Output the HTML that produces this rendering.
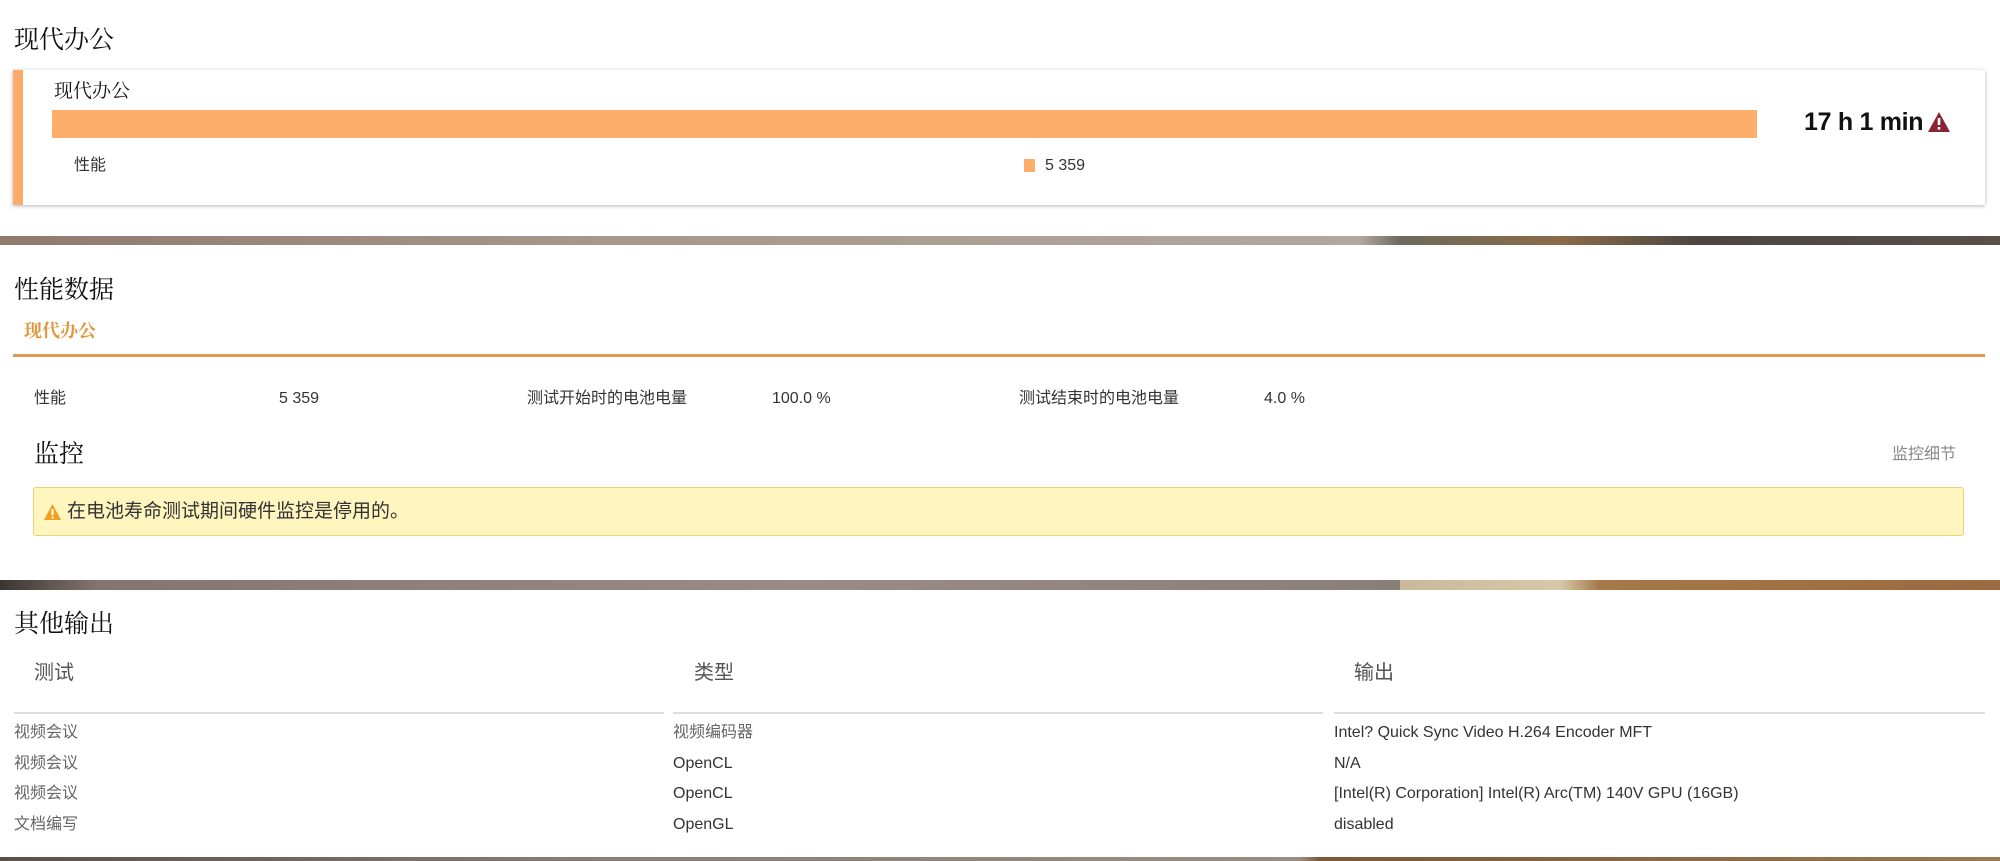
<!DOCTYPE html>
<html><head><meta charset="utf-8"><style>
*{margin:0;padding:0;box-sizing:border-box}
body{width:2000px;height:861px;background:#fff;position:relative;overflow:hidden;font-family:"Liberation Sans","Noto Sans CJK SC",sans-serif;color:#222}
.a{position:absolute;white-space:nowrap;line-height:1}
.h{font-size:25px;color:#111;font-family:"Noto Serif CJK SC","Noto Sans CJK SC",serif}
.s{font-size:16px;color:#333}
.g{font-size:16px;color:#666}
.band{position:absolute;left:0;width:2000px}
</style></head><body>
<div class="a h" style="left:14px;top:26px">现代办公</div>
<div style="position:absolute;left:13px;top:70px;width:1972px;height:135px;background:#fff;box-shadow:0 1px 4px rgba(0,0,0,.3);border-left:10px solid #fdab6a"></div>
<div class="a" style="left:54px;top:80px;font-size:19px;color:#111;font-family:'Noto Serif CJK SC',serif">现代办公</div>
<div style="position:absolute;left:52px;top:110px;width:1705px;height:28px;background:#fdae6b"></div>
<div class="a" style="left:1804px;top:110px;font-size:25px;font-weight:bold;color:#111;font-family:'Liberation Sans',sans-serif;letter-spacing:-0.3px">17 h 1 min</div>
<svg style="position:absolute;left:1927px;top:111px" width="24" height="22" viewBox="0 0 24 22"><path d="M12 1 L23 21 L1 21 Z" fill="#8b2332"/><rect x="10.7" y="7" width="2.6" height="7" fill="#fff"/><rect x="10.7" y="16" width="2.6" height="2.6" fill="#fff"/></svg>
<div class="a s" style="left:74px;top:158px">性能</div>
<div style="position:absolute;left:1024px;top:159px;width:11px;height:13px;background:#fdae6b"></div>
<div class="a s" style="left:1045px;top:158px">5 359</div>
<div class="band" style="top:236px;height:9px;background:linear-gradient(90deg,#8f7a6c,#a8978a 30%,#b3a79c 68%,#6e6a5c 70%,#8b6b48 78%,#4c4540 85%,#5a5048 100%)"></div>
<div class="a h" style="left:14px;top:276px">性能数据</div>
<div class="a" style="left:24px;top:321px;font-size:18px;color:#e0963c;font-weight:bold;font-family:'Noto Serif CJK SC',serif">现代办公</div>
<div style="position:absolute;left:13px;top:354px;width:1972px;height:3px;background:#dc9a56"></div>
<div class="a s" style="left:34px;top:391px">性能</div>
<div class="a s" style="left:279px;top:391px">5 359</div>
<div class="a s" style="left:527px;top:391px">测试开始时的电池电量</div>
<div class="a s" style="left:772px;top:391px">100.0 %</div>
<div class="a s" style="left:1019px;top:391px">测试结束时的电池电量</div>
<div class="a s" style="left:1264px;top:391px">4.0 %</div>
<div class="a h" style="left:34px;top:440px">监控</div>
<div class="a" style="left:1892px;top:447px;font-size:16px;color:#888">监控细节</div>
<div style="position:absolute;left:33px;top:487px;width:1931px;height:49px;background:#fff5bf;border:1px solid #e6d374;border-radius:3px"></div>
<svg style="position:absolute;left:43px;top:503px" width="19" height="18" viewBox="0 0 19 18"><path d="M9.5 1 L18 17 L1 17 Z" fill="#f0a020"/><rect x="8.5" y="6" width="2" height="6" fill="#fff"/><rect x="8.5" y="13.5" width="2" height="2" fill="#fff"/></svg>
<div class="a" style="left:67px;top:502px;font-size:19px;color:#333">在电池寿命测试期间硬件监控是停用的。</div>
<div class="band" style="top:580px;height:10px;background:linear-gradient(90deg,#3a3533,#857570 5%,#9a8c84 40%,#8a7e78 70%,#c9b99a 70%,#d7c8a8 78%,#a57848 80%,#9a6a40 100%)"></div>
<div class="a h" style="left:14px;top:610px">其他输出</div>
<div class="a" style="left:34px;top:663px;font-size:20px;color:#555">测试</div>
<div class="a" style="left:694px;top:663px;font-size:20px;color:#555">类型</div>
<div class="a" style="left:1354px;top:663px;font-size:20px;color:#555">输出</div>
<div style="position:absolute;left:14px;top:712px;width:650px;height:2px;background:#ddd"></div>
<div style="position:absolute;left:673px;top:712px;width:650px;height:2px;background:#ddd"></div>
<div style="position:absolute;left:1334px;top:712px;width:651px;height:2px;background:#ddd"></div>
<div class="a g" style="left:14px;top:725px">视频会议</div>
<div class="a g" style="left:673px;top:725px">视频编码器</div>
<div class="a s" style="left:1334px;top:725px">Intel? Quick Sync Video H.264 Encoder MFT</div>
<div class="a g" style="left:14px;top:756px">视频会议</div>
<div class="a s" style="left:673px;top:756px">OpenCL</div>
<div class="a s" style="left:1334px;top:756px">N/A</div>
<div class="a g" style="left:14px;top:786px">视频会议</div>
<div class="a s" style="left:673px;top:786px">OpenCL</div>
<div class="a s" style="left:1334px;top:786px">[Intel(R) Corporation] Intel(R) Arc(TM) 140V GPU (16GB)</div>
<div class="a g" style="left:14px;top:817px">文档编写</div>
<div class="a s" style="left:673px;top:817px">OpenGL</div>
<div class="a s" style="left:1334px;top:817px">disabled</div>
<div class="band" style="top:857px;height:4px;background:linear-gradient(90deg,#5a5048,#8a7e78 30%,#9a8c84 65%,#7a5838 66%,#9a7a50 100%)"></div>
</body></html>
